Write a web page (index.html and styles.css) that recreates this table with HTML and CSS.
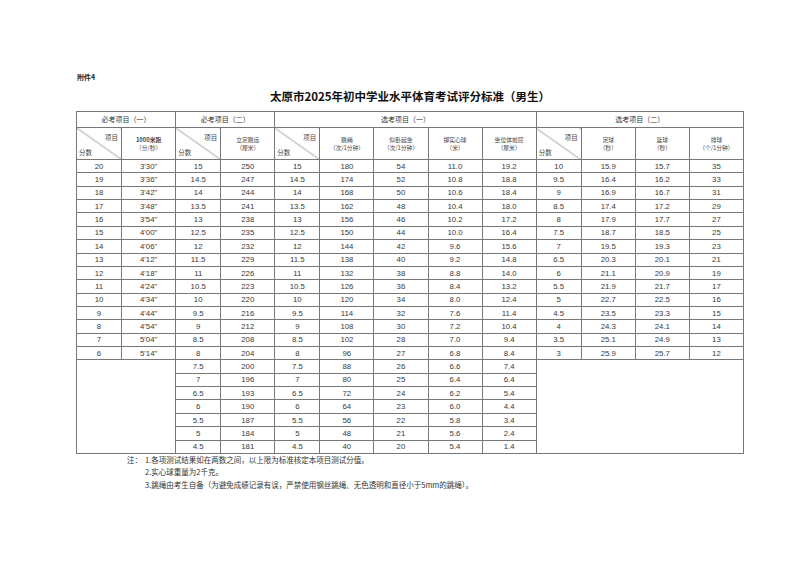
FILE: index.html
```html
<!DOCTYPE html>
<html lang="zh">
<head>
<meta charset="utf-8">
<title>太原市2025年初中学业水平体育考试评分标准（男生）</title>
<link rel="stylesheet" href="styles.css">
</head>
<body>
<div class="page">
  <div class="annex">附件4</div>
  <h1 class="title">太原市2025年初中学业水平体育考试评分标准（男生）</h1>
  <table class="score">
    <colgroup>
      <col class="c-s"><col class="c-w"><col class="c-s"><col class="c-w"><col class="c-s"><col class="c-w"><col class="c-w"><col class="c-w"><col class="c-w"><col class="c-s"><col class="c-w"><col class="c-w"><col class="c-w">
    </colgroup>
    <thead>
      <tr class="h1">
        <th colspan="2">必考项目（一）</th>
        <th colspan="2">必考项目（二）</th>
        <th colspan="5">选考项目（一）</th>
        <th colspan="4">选考项目（二）</th>
      </tr>
      <tr class="h2">
        <th class="diag"><span class="d-top">项目</span><span class="d-bot">分数</span></th>
        <th><span class="lbl b">1000米跑</span><span class="lbl">（分/秒）</span></th>
        <th class="diag"><span class="d-top">项目</span><span class="d-bot">分数</span></th>
        <th><span class="lbl">立定跳远</span><span class="lbl">（厘米）</span></th>
        <th class="diag"><span class="d-top">项目</span><span class="d-bot">分数</span></th>
        <th><span class="lbl">跳绳</span><span class="lbl">（次/1分钟）</span></th>
        <th><span class="lbl">仰卧起坐</span><span class="lbl">（次/1分钟）</span></th>
        <th><span class="lbl">掷实心球</span><span class="lbl">（米）</span></th>
        <th><span class="lbl">坐位体前屈</span><span class="lbl">（厘米）</span></th>
        <th class="diag"><span class="d-top">项目</span><span class="d-bot">分数</span></th>
        <th><span class="lbl">足球</span><span class="lbl">（秒）</span></th>
        <th><span class="lbl">篮球</span><span class="lbl">（秒）</span></th>
        <th><span class="lbl">排球</span><span class="lbl">（个/1分钟）</span></th>
      </tr>
    </thead>
    <tbody>
      <tr><td>20</td><td>3'30"</td><td>15</td><td>250</td><td>15</td><td>180</td><td>54</td><td>11.0</td><td>19.2</td><td>10</td><td>15.9</td><td>15.7</td><td>35</td></tr>
      <tr><td>19</td><td>3'36"</td><td>14.5</td><td>247</td><td>14.5</td><td>174</td><td>52</td><td>10.8</td><td>18.8</td><td>9.5</td><td>16.4</td><td>16.2</td><td>33</td></tr>
      <tr><td>18</td><td>3'42"</td><td>14</td><td>244</td><td>14</td><td>168</td><td>50</td><td>10.6</td><td>18.4</td><td>9</td><td>16.9</td><td>16.7</td><td>31</td></tr>
      <tr><td>17</td><td>3'48"</td><td>13.5</td><td>241</td><td>13.5</td><td>162</td><td>48</td><td>10.4</td><td>18.0</td><td>8.5</td><td>17.4</td><td>17.2</td><td>29</td></tr>
      <tr><td>16</td><td>3'54"</td><td>13</td><td>238</td><td>13</td><td>156</td><td>46</td><td>10.2</td><td>17.2</td><td>8</td><td>17.9</td><td>17.7</td><td>27</td></tr>
      <tr><td>15</td><td>4'00"</td><td>12.5</td><td>235</td><td>12.5</td><td>150</td><td>44</td><td>10.0</td><td>16.4</td><td>7.5</td><td>18.7</td><td>18.5</td><td>25</td></tr>
      <tr><td>14</td><td>4'06"</td><td>12</td><td>232</td><td>12</td><td>144</td><td>42</td><td>9.6</td><td>15.6</td><td>7</td><td>19.5</td><td>19.3</td><td>23</td></tr>
      <tr><td>13</td><td>4'12"</td><td>11.5</td><td>229</td><td>11.5</td><td>138</td><td>40</td><td>9.2</td><td>14.8</td><td>6.5</td><td>20.3</td><td>20.1</td><td>21</td></tr>
      <tr><td>12</td><td>4'18"</td><td>11</td><td>226</td><td>11</td><td>132</td><td>38</td><td>8.8</td><td>14.0</td><td>6</td><td>21.1</td><td>20.9</td><td>19</td></tr>
      <tr><td>11</td><td>4'24"</td><td>10.5</td><td>223</td><td>10.5</td><td>126</td><td>36</td><td>8.4</td><td>13.2</td><td>5.5</td><td>21.9</td><td>21.7</td><td>17</td></tr>
      <tr><td>10</td><td>4'34"</td><td>10</td><td>220</td><td>10</td><td>120</td><td>34</td><td>8.0</td><td>12.4</td><td>5</td><td>22.7</td><td>22.5</td><td>16</td></tr>
      <tr><td>9</td><td>4'44"</td><td>9.5</td><td>216</td><td>9.5</td><td>114</td><td>32</td><td>7.6</td><td>11.4</td><td>4.5</td><td>23.5</td><td>23.3</td><td>15</td></tr>
      <tr><td>8</td><td>4'54"</td><td>9</td><td>212</td><td>9</td><td>108</td><td>30</td><td>7.2</td><td>10.4</td><td>4</td><td>24.3</td><td>24.1</td><td>14</td></tr>
      <tr><td>7</td><td>5'04"</td><td>8.5</td><td>208</td><td>8.5</td><td>102</td><td>28</td><td>7.0</td><td>9.4</td><td>3.5</td><td>25.1</td><td>24.9</td><td>13</td></tr>
      <tr><td>6</td><td>5'14"</td><td>8</td><td>204</td><td>8</td><td>96</td><td>27</td><td>6.8</td><td>8.4</td><td>3</td><td>25.9</td><td>25.7</td><td>12</td></tr>
      <tr><td class="blank" colspan="2" rowspan="7"></td><td>7.5</td><td>200</td><td>7.5</td><td>88</td><td>26</td><td>6.6</td><td>7.4</td><td class="blank" colspan="4" rowspan="7"></td></tr>
      <tr><td>7</td><td>196</td><td>7</td><td>80</td><td>25</td><td>6.4</td><td>6.4</td></tr>
      <tr><td>6.5</td><td>193</td><td>6.5</td><td>72</td><td>24</td><td>6.2</td><td>5.4</td></tr>
      <tr><td>6</td><td>190</td><td>6</td><td>64</td><td>23</td><td>6.0</td><td>4.4</td></tr>
      <tr><td>5.5</td><td>187</td><td>5.5</td><td>56</td><td>22</td><td>5.8</td><td>3.4</td></tr>
      <tr><td>5</td><td>184</td><td>5</td><td>48</td><td>21</td><td>5.6</td><td>2.4</td></tr>
      <tr><td>4.5</td><td>181</td><td>4.5</td><td>40</td><td>20</td><td>5.4</td><td>1.4</td></tr>
    </tbody>
  </table>
  <div class="notes">
    <span class="note-head">注：</span>
    <ol class="note-list">
      <li>1.各项测试结果如在两数之间，以上限为标准核定本项目测试分值。</li>
      <li>2.实心球重量为2千克。</li>
      <li>3.跳绳由考生自备（为避免成绩记录有误，严禁使用钢丝跳绳、无色透明和直径小于5mm的跳绳）。</li>
    </ol>
  </div>
</div>
</body>
</html>
```
FILE: styles.css
```css
html, body {
  margin: 0;
  padding: 0;
  background: #ffffff;
}

.page {
  width: 800px;
  height: 564px;
  box-sizing: border-box;
  padding-top: 72px;
  font-family: "Noto Sans CJK SC", "Liberation Sans", sans-serif;
  color: #333;
}

.annex {
  margin-left: 77px;
  font-size: 7px;
  line-height: 10px;
  font-weight: 700;
  color: #222;
}

.title {
  width: 668px;
  margin: 6px 0 0 76px;
  text-align: center;
  font-size: 11.5px;
  line-height: 16px;
  font-weight: 700;
  color: #111;
}

.score {
  margin: 7px 0 0 76px;
  width: 668px;
  border-collapse: collapse;
  table-layout: fixed;
  border: 1px solid #555;
}

.c-s { width: 45px; }
.c-w { width: 54px; }

.score th,
.score td {
  border: 1px solid #777;
  padding: 0;
  text-align: center;
  vertical-align: middle;
  overflow: hidden;
}

.h1 th {
  height: 15px;
  font-size: 7px;
  font-weight: 400;
  color: #333;
  line-height: 9px;
}

.h2 th {
  height: 31px;
  font-weight: 400;
  color: #444;
}

.lbl {
  display: block;
  font-size: 5.8px;
  line-height: 8px;
}

.lbl.b {
  font-weight: 700;
}

.diag {
  background: linear-gradient(to top right, transparent calc(50% - 0.6px), #777 50%, transparent calc(50% + 0.6px));
}

.d-top,
.d-bot {
  display: block;
  font-size: 6.5px;
  line-height: 9px;
}

.d-top {
  text-align: right;
  padding-right: 3px;
  margin-top: -3px;
}

.d-bot {
  text-align: left;
  padding-left: 2px;
  margin-top: 6px;
  margin-bottom: -5px;
}

.score tbody td {
  height: 12.36px;
  font-family: "Liberation Sans", Arial, sans-serif;
  font-size: 7.8px;
  line-height: 9px;
  color: #3a3a3a;
}

.score tbody td.blank {
  height: auto;
}

.notes {
  display: flex;
  margin: 0 0 0 127px;
  font-size: 7.5px;
  line-height: 12.5px;
  color: #333;
}

.note-head {
  width: 18px;
  flex: none;
}

.note-list {
  margin: 0;
  padding: 0;
  list-style: none;
}
```
